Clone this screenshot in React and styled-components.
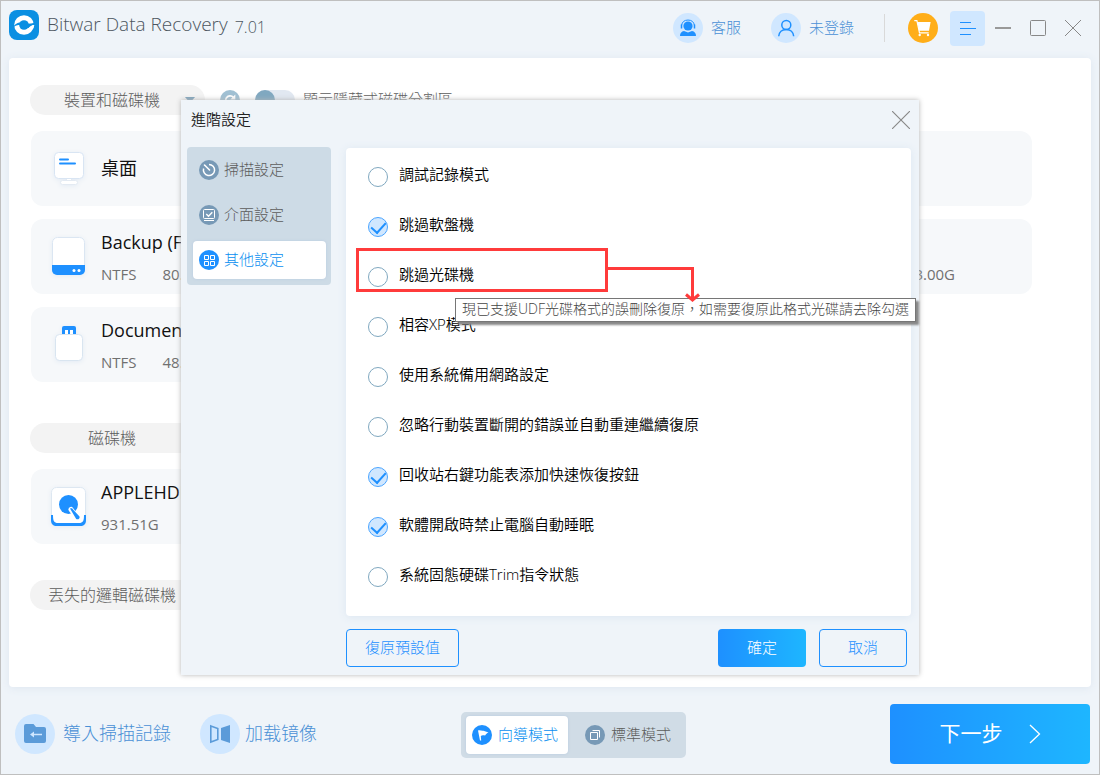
import React, { useState } from "react";
import styled, { createGlobalStyle, css } from "styled-components";

const GlobalStyle = createGlobalStyle`
  * {
    box-sizing: border-box;
  }
  body {
    margin: 0;
    font-family: "Open Sans", "Noto Sans CJK TC", sans-serif;
    font-size: 15px;
    font-weight: 300;
    color: #5c5c5c;
  }
  button,
  input {
    font: inherit;
    color: inherit;
    margin: 0;
  }
  button {
    padding: 0;
    border: 0;
    background: none;
    cursor: pointer;
  }
  svg {
    display: block;
    flex: none;
  }
`;

/* ---------- icons ---------- */

const LogoIcon = () => (
  <svg width="30" height="30" viewBox="0 0 30 30">
    <rect width="30" height="30" rx="8" fill="#0a8fe2" />
    <circle cx="15" cy="15" r="9.800" fill="#fff" />
    <path d="M17 13.800l5-.3 4-.7v2c-2.600.2-4.500 1.200-6 3.200l-3-.5z" fill="#0a8fe2" />
    <circle cx="15" cy="15" r="4.800" fill="#0a8fe2" />
    <path d="M4 17.800c1-3 3.300-5 7.300-5.600l1.500 3.300c-3.800-1-6.300-.3-8.800 2.300z" fill="#0a8fe2" />
    <path d="M19.800 17.800c1.300-1.700 3-2.600 5.500-2.900l-.8 3.300-3 1z" fill="#fff" />
  </svg>
);

const SupportIcon = () => (
  <svg width="30" height="30" viewBox="0 0 30 30">
    <circle cx="15" cy="15" r="15" fill="#d0e7ff" />
    <circle cx="15" cy="13" r="4.600" fill="#1e90ff" />
    <path d="M8.500 12.500a6.600 6.600 0 0 1 13 0" fill="none" stroke="#1e90ff" strokeWidth="1" />
    <path d="M8.500 11.500v4M21.500 11.500v4" stroke="#1e90ff" strokeWidth="1.500" />
    <path d="M7 23c0-2.800 1.400-4.500 4-5l4 1.600 4-1.600c2.600.5 4 2.200 4 5z" fill="#1e90ff" />
  </svg>
);

const UserIcon = () => (
  <svg width="30" height="30" viewBox="0 0 30 30" fill="none" stroke="#1e90ff" strokeWidth="1.500">
    <circle cx="15" cy="15" r="15" fill="#d0e7ff" stroke="none" />
    <circle cx="15.300" cy="12" r="4.500" />
    <path d="M7.700 23.300c.3-4 3.300-6.800 7.500-6.800s7.200 2.800 7.500 6.800" />
  </svg>
);

const CartIcon = () => (
  <svg width="30" height="30" viewBox="0 0 30 30">
    <circle cx="15" cy="15" r="15" fill="#ffae19" />
    <path d="M9.500 9H22.600l-1.600 8.800H11z" fill="#fff" />
    <path d="M6.300 7.600h2.600l2.600 12.200h9.200" fill="none" stroke="#fff" strokeWidth="1.200" />
    <circle cx="11.700" cy="22" r="1.200" fill="#fff" />
    <circle cx="20" cy="22" r="1.200" fill="#fff" />
  </svg>
);

const MenuIcon = () => (
  <svg width="16" height="15" viewBox="0 0 16 15" stroke="#1e90ff">
    <path d="M0 1.500h11M0 7.500h16M0 13.500h11" />
  </svg>
);

const MinimizeIcon = () => (
  <svg width="16" height="16" viewBox="0 0 16 16">
    <rect y="7" width="16" height="2" fill="#999" />
  </svg>
);

const MaximizeIcon = () => (
  <svg width="16" height="16" viewBox="0 0 16 16">
    <rect x="0.500" y="0.500" width="15" height="15" rx="1" fill="none" stroke="#888" />
  </svg>
);

const CloseIcon = ({ size = 16 }) => (
  <svg width={size} height={size} viewBox="0 0 16 16" stroke="#888">
    <path d="M0 0l16 16M16 0L0 16" />
  </svg>
);

const RefreshIcon = () => (
  <svg width="20" height="20" viewBox="0 0 20 20">
    <circle cx="10" cy="10" r="10" fill="#a0c0d3" />
    <path d="M13.500 7.500a4.500 4.500 0 1 0 1 4" fill="none" stroke="#fff" strokeWidth="1.800" />
    <path d="M15.300 4.500v5h-5z" fill="#fff" />
  </svg>
);

const ArrowDown = () => (
  <svg width="10" height="6" viewBox="0 0 10 6">
    <path d="M0 0h10L5 6z" fill="#7fa3bb" />
  </svg>
);

const DesktopIcon = () => (
  <svg width="36" height="36" viewBox="0 0 36 36">
    <path d="M15.500 27h5v4h-5z" fill="#fff" stroke="#e3eaf2" />
    <rect x="9.500" y="29.500" width="17" height="4" rx="2" fill="#fff" stroke="#e3eaf2" />
    <rect x="3.500" y="1.500" width="29" height="26" rx="4" fill="#fff" stroke="#d9e5f3" />
    <path d="M9 8.500h8M9 12.500h15" stroke="#1e90ff" strokeWidth="2" strokeLinecap="round" />
  </svg>
);

const DriveIcon = () => (
  <svg width="36" height="40" viewBox="0 0 36 40">
    <rect x="1.500" y="0.500" width="32" height="37" rx="5" fill="#fff" stroke="#dbe6f2" />
    <path d="M1 28h33v5a5 5 0 0 1-5 5H6a5 5 0 0 1-5-5z" fill="#1e90ff" />
    <circle cx="23" cy="33.500" r="1.500" fill="#fff" />
    <circle cx="28" cy="33.500" r="1.500" fill="#fff" />
  </svg>
);

const UsbIcon = () => (
  <svg width="36" height="38" viewBox="0 0 36 38">
    <rect x="11" y="0" width="14" height="12" rx="2" fill="#1e90ff" />
    <path d="M14 4h3v4h-3zM19 4h3v4h-3z" fill="#fff" />
    <rect x="4.500" y="8.500" width="27" height="26" rx="4" fill="#fff" stroke="#d9e5f0" />
  </svg>
);

const DiskIcon = () => (
  <svg width="36" height="40" viewBox="0 0 36 40">
    <rect x="0.500" y="0.500" width="34" height="37" rx="5" fill="#fff" stroke="#dde7f1" />
    <path d="M0 28v5c0 4 2 6 6 6h23c4 0 6-2 6-6v-5h-2c0 6-1 8-5 8H7c-4 0-5-2-5-8z" fill="#1e90ff" />
    <circle cx="17.500" cy="17.500" r="9.500" fill="#1e90ff" />
    <path d="M20 22.500l6 8" stroke="#fff" strokeWidth="5" strokeLinecap="round" />
    <path d="M19 21.500c1.500-.8 2.600-.2 3 1l6.500 7c.8 2-1.600 3.600-3.300 2.500z" fill="#1e90ff" />
  </svg>
);

const Disc = ({ active, children }) => (
  <svg width="20" height="20" viewBox="0 0 20 20" fill="none" stroke="#fff">
    <circle cx="10" cy="10" r="10" fill={active ? "#1e90ff" : "#7799b6"} stroke="none" />
    {children}
  </svg>
);

const ScanIcon = ({ active }) => (
  <Disc active={active}>
    <path d="M10 4.400A5.600 5.600 0 1 1 4.600 8.500" strokeWidth="1.500" />
    <path d="M5.500 5l5 5" strokeWidth="1.600" strokeLinecap="round" />
  </Disc>
);

const InterfaceIcon = ({ active }) => (
  <Disc active={active}>
    <rect x="4.500" y="4.500" width="11" height="9" rx="1" />
    <path d="M5 15.500h10" />
    <path d="M7.300 9l2.200 2.200 3.800-4" strokeWidth="1.400" />
  </Disc>
);

const OtherIcon = ({ active }) => (
  <Disc active={active}>
    <path d="M5.500 5.500h4v4h-4zM11.500 5.500h4v4h-4zM5.500 11.500h4v4h-4zM11.500 11.500h4v4h-4z" />
  </Disc>
);

const FlagIcon = ({ active }) => (
  <Disc active={active}>
    <path d="M6 5.500c2-1 3.500.8 5.500.2l5 1.800c-1.800.8-2.400 1.500-3.400 3-1.600-.3-2.800-.8-4.300.5L9.200 15.500H8z" fill="#fff" stroke="none" />
  </Disc>
);

const WindowsIcon = ({ active }) => (
  <Disc active={active}>
    <path d="M5.500 7.500h7v7h-7z" />
    <path d="M7.500 5.500h7v7" />
  </Disc>
);

const FolderIcon = () => (
  <svg width="40" height="40" viewBox="0 0 40 40">
    <circle cx="20" cy="20" r="20" fill="#d0e7ff" />
    <path d="M9 12a2 2 0 0 1 2-2h7.500l2.500 3h8a2 2 0 0 1 2 2v12a2 2 0 0 1-2 2H11a2 2 0 0 1-2-2z" fill="#5b9bd9" />
    <path d="M17 20.500h10" stroke="#d0e7ff" strokeWidth="1.500" />
    <path d="M15 20.500l4-3v6z" fill="#d0e7ff" />
  </svg>
);

const MirrorIcon = () => (
  <svg width="40" height="40" viewBox="0 0 40 40">
    <circle cx="20" cy="20" r="20" fill="#d0e7ff" />
    <path d="M10.800 12l7 2.500v11l-7 2.500z" fill="none" stroke="#5b9bd9" strokeWidth="1.600" />
    <path d="M30 11l-9 3v12l9 3z" fill="#5b9bd9" />
  </svg>
);

const NextIcon = () => (
  <svg width="12" height="20" viewBox="0 0 12 20" fill="none" stroke="#fff" strokeWidth="1.300">
    <path d="M1 1l9.500 9L1 19" />
  </svg>
);

/* ---------- data ---------- */

const tabs = [
  { label: "掃描設定", Icon: ScanIcon },
  { label: "介面設定", Icon: InterfaceIcon },
  { label: "其他設定", Icon: OtherIcon },
];

const modes = [
  { label: "向導模式", Icon: FlagIcon },
  { label: "標準模式", Icon: WindowsIcon },
];

const options = [
  { id: "debug", label: "調試記錄模式" },
  { id: "floppy", label: "跳過軟盤機", checked: true },
  {
    id: "cdrom",
    label: "跳過光碟機",
    tip: "現已支援UDF光碟格式的誤刪除復原，如需要復原此格式光碟請去除勾選",
  },
  { id: "xp", label: "相容XP模式" },
  { id: "network", label: "使用系統備用網路設定" },
  { id: "mobile", label: "忽略行動裝置斷開的錯誤並自動重連繼續復原" },
  { id: "recycle", label: "回收站右鍵功能表添加快速恢復按鈕", checked: true },
  { id: "sleep", label: "軟體開啟時禁止電腦自動睡眠", checked: true },
  { id: "trim", label: "系統固態硬碟Trim指令狀態" },
];

/* ---------- parts ---------- */

const TopBar = () => (
  <Header>
    <Brand>
      <LogoIcon />
      <AppName>Bitwar Data Recovery</AppName>
      <Version>7.01</Version>
    </Brand>
    <HeaderLink>
      <SupportIcon />
      <Caption>客服</Caption>
    </HeaderLink>
    <HeaderLink>
      <UserIcon />
      <Caption>未登錄</Caption>
    </HeaderLink>
    <Divider />
    <CartButton aria-label="cart">
      <CartIcon />
    </CartButton>
    <MenuButton aria-label="menu">
      <MenuIcon />
    </MenuButton>
    <WindowButtons>
      <button aria-label="minimize">
        <MinimizeIcon />
      </button>
      <button aria-label="maximize">
        <MaximizeIcon />
      </button>
      <button aria-label="close">
        <CloseIcon />
      </button>
    </WindowButtons>
  </Header>
);

const GroupPill = ({ children }) => (
  <Pill>
    <span>{children}</span>
    <ArrowDown />
  </Pill>
);

const DriveCard = ({ icon, name, fs, size }) => (
  <Card>
    <CardIcon>{icon}</CardIcon>
    <div>
      <CardName>{name}</CardName>
      {size && (
        <CardInfo>
          {fs && <span>{fs}</span>}
          <span>{size}</span>
        </CardInfo>
      )}
    </div>
  </Card>
);

const DrivePanel = () => (
  <Panel>
    <Section $space={41}>
      <PanelTools>
        <GroupPill>裝置和磁碟機</GroupPill>
        <button aria-label="refresh">
          <RefreshIcon />
        </button>
        <ToggleLabel>
          <Toggle type="checkbox" />
          <Caption>顯示隱藏式磁碟分割區</Caption>
        </ToggleLabel>
      </PanelTools>
      <Cards>
        <DriveCard icon={<DesktopIcon />} name="桌面" />
        <Card />
        <Card />
        <DriveCard icon={<DriveIcon />} name="Backup (F:)" fs="NTFS" size="80.00G" />
        <Card />
        <Card $end>
          <CardInfo>3.00G</CardInfo>
        </Card>
        <DriveCard icon={<UsbIcon />} name="Documents" fs="NTFS" size="48.00G" />
      </Cards>
    </Section>
    <Section $space={36}>
      <GroupPill>磁碟機</GroupPill>
      <Cards>
        <DriveCard icon={<DiskIcon />} name="APPLEHDD" size="931.51G" />
      </Cards>
    </Section>
    <Section $space={0}>
      <GroupPill>丟失的邏輯磁碟機</GroupPill>
    </Section>
  </Panel>
);

const Callout = ({ text }) => (
  <>
    <CalloutBox />
    <Tooltip role="tooltip">{text}</Tooltip>
    <CalloutArrow width="94" height="40" viewBox="0 0 94 40" fill="none" stroke="#ff3b3b" strokeWidth="3">
      <path d="M0 4.500h84.500v30" />
      <path d="M78 30.500l6.500 5.500 6.500-5.500" />
    </CalloutArrow>
  </>
);

const SettingsDialog = ({ onClose }) => {
  const [tab, setTab] = useState(2);

  return (
    <Overlay>
      <Dialog role="dialog" aria-labelledby="dialog-title">
        <DialogHead>
          <DialogTitle id="dialog-title">進階設定</DialogTitle>
          <button aria-label="close" onClick={onClose}>
            <CloseIcon size={18} />
          </button>
        </DialogHead>
        <DialogBody>
          <SideNav>
            {tabs.map(({ label, Icon }, i) => (
              <SideItem key={label} $active={i === tab} onClick={() => setTab(i)}>
                <Icon active={i === tab} />
                <Caption>{label}</Caption>
              </SideItem>
            ))}
          </SideNav>
          <OptionList>
            {options.map((option) => (
              <OptionRow key={option.id}>
                <RoundCheck type="checkbox" id={option.id} defaultChecked={option.checked} />
                <OptionLabel htmlFor={option.id}>{option.label}</OptionLabel>
                {option.tip && <Callout text={option.tip} />}
              </OptionRow>
            ))}
          </OptionList>
        </DialogBody>
        <DialogFoot>
          <DialogButton $wide>復原預設值</DialogButton>
          <DialogActions>
            <DialogButton $primary onClick={onClose}>
              確定
            </DialogButton>
            <DialogButton onClick={onClose}>取消</DialogButton>
          </DialogActions>
        </DialogFoot>
      </Dialog>
    </Overlay>
  );
};

const BottomBar = () => {
  const [mode, setMode] = useState(0);

  return (
    <Footer>
      <FooterLinks>
        <FooterLink $gap={8}>
          <FolderIcon />
          <Caption>導入掃描記錄</Caption>
        </FooterLink>
        <FooterLink $gap={5}>
          <MirrorIcon />
          <Caption>加载镜像</Caption>
        </FooterLink>
      </FooterLinks>
      <Segment>
        {modes.map(({ label, Icon }, i) => (
          <SegmentItem key={label} $active={i === mode} onClick={() => setMode(i)}>
            <Icon active={i === mode} />
            <Caption>{label}</Caption>
          </SegmentItem>
        ))}
      </Segment>
      <NextButton>
        <Caption>下一步</Caption>
        <NextIcon />
      </NextButton>
    </Footer>
  );
};

const App = () => {
  const [open, setOpen] = useState(true);

  return (
    <>
      <GlobalStyle />
      <Window>
        <TopBar />
        <DrivePanel />
        <BottomBar />
        {open && <SettingsDialog onClose={() => setOpen(false)} />}
      </Window>
    </>
  );
};

/* ---------- styles ---------- */

const Window = styled.div`
  position: relative;
  display: flex;
  flex-direction: column;
  min-height: 100vh;
  border: 1px solid #bfbfbf;
  background: #eff4f9;
`;

const Caption = styled.span`
  padding-bottom: 4px;
`;

const Header = styled.header`
  display: flex;
  align-items: center;
  height: 57px;
  padding: 0 18px 3px 8px;
`;

const Brand = styled.div`
  display: flex;
  align-items: center;
  height: 30px;
  margin-right: auto;
  margin-bottom: 6px;
`;

const AppName = styled.h1`
  margin: 0 7px 0 8px;
  padding-bottom: 2px;
  font-size: 19px;
  line-height: 26px;
  font-weight: 300;
  color: #4c5660;
`;

const Version = styled.span`
  padding-top: 3px;
  font-size: 16px;
  color: #4c5660;
`;

const HeaderLink = styled.button`
  display: flex;
  align-items: center;
  gap: 8px;
  margin-right: 30px;
  color: #4a90d6;
`;

const Divider = styled.span`
  width: 1px;
  height: 28px;
  background: #d9d9d9;
`;

const CartButton = styled.button`
  margin: 0 12px 0 23px;
`;

const MenuButton = styled.button`
  display: grid;
  place-items: center;
  width: 35px;
  height: 35px;
  border-radius: 4px;
  background: #d0e7ff;
`;

const WindowButtons = styled.div`
  display: flex;
  gap: 19px;
  margin-left: 10px;
`;

const Panel = styled.main`
  flex: 1;
  margin: 0 8px;
  padding: 27px 59px 27px 21px;
  border-radius: 4px;
  background: #fff;
  box-shadow: 0 1px 8px #dde6f0;
`;

const Section = styled.section`
  margin-bottom: ${({ $space }) => $space}px;
`;

const PanelTools = styled.div`
  display: flex;
  align-items: center;
  gap: 15px;
`;

const Pill = styled.div`
  display: flex;
  align-items: center;
  width: 175px;
  height: 30px;
  padding: 0 10px 0 9px;
  border-radius: 15px;
  background: #f3f3f3;
  font-size: 16px;
  white-space: nowrap;

  span {
    flex: 1;
    padding-bottom: 2px;
    text-align: center;
  }
`;

const ToggleLabel = styled.label`
  display: flex;
  align-items: center;
  gap: 8px;
`;

const Toggle = styled.input`
  appearance: none;
  width: 40px;
  height: 20px;
  border-radius: 10px;
  background: #e1e8f1;

  &::before {
    content: "";
    display: block;
    width: 20px;
    height: 20px;
    border-radius: 50%;
    background: #80a8c0;
  }
  &:checked::before {
    margin-left: 20px;
  }
`;

const Cards = styled.div`
  display: grid;
  grid-template-columns: repeat(3, 1fr);
  gap: 13px 20px;
  margin: 16px 0 0 1px;
`;

const Card = styled.article`
  display: flex;
  align-items: center;
  gap: 14px;
  height: 75px;
  padding: 0 20px;
  border-radius: 12px;
  background: #f6f8fa;

  ${({ $end }) =>
    $end &&
    css`
      justify-content: flex-end;
      align-items: flex-end;
      padding: 0 77px 10px 20px;
    `}
`;

const CardIcon = styled.div`
  display: grid;
  place-items: center;
  width: 36px;
  filter: drop-shadow(0 1px 2px #e3ebf4);
`;

const CardName = styled.h2`
  margin: 0;
  padding-bottom: 1px;
  font-size: 18px;
  line-height: 24px;
  font-weight: 400;
  color: #111;
`;

const CardInfo = styled.p`
  display: flex;
  gap: 26px;
  margin: 9px 0 0;
  font-size: 15px;
  line-height: 20px;
  font-weight: 400;
  color: #707070;
`;

const Footer = styled.footer`
  display: flex;
  align-items: center;
  height: 87px;
  padding: 6px 9px 0 14px;
`;

const FooterLinks = styled.div`
  display: flex;
  gap: 29px;
`;

const FooterLink = styled.button`
  display: flex;
  align-items: center;
  gap: ${({ $gap }) => $gap}px;
  font-size: 18px;
  color: #4a90d6;
`;

const Segment = styled.div`
  display: flex;
  gap: 11px;
  margin: 3px 0 0 144px;
  padding: 4px 5px;
  border-radius: 5px;
  background: #d0dce6;
`;

const itemStyle = css`
  display: flex;
  align-items: center;
  height: 38px;
  padding: 0 6px;
  border-radius: 4px;
  color: ${({ $active }) => ($active ? "#0a8ff0" : "#5c5c5c")};
  background: ${({ $active }) => ($active ? "#fff" : "none")};
  box-shadow: ${({ $active }) => ($active ? "0 0 3px #b9cbe0" : "none")};
`;

const SegmentItem = styled.button`
  ${itemStyle}
  gap: 6px;
  padding-right: 10px;
`;

const NextButton = styled.button`
  display: flex;
  align-items: center;
  justify-content: center;
  gap: 26px;
  width: 200px;
  height: 60px;
  margin-left: auto;
  border-radius: 4px;
  background: linear-gradient(90deg, #1e90ff, #1eb6ff);
  font-size: 21px;
  font-weight: 400;
  color: #fff;
`;

const Overlay = styled.div`
  position: absolute;
  inset: 0;
  display: grid;
  place-items: center;
`;

const Dialog = styled.div`
  width: 100%;
  max-width: 738px;
  background: #eff4f9;
  box-shadow: 0 0 5px #b5b5b5;
`;

const DialogHead = styled.div`
  display: flex;
  align-items: center;
  justify-content: space-between;
  height: 47px;
  padding: 0 9px 8px 10px;
`;

const DialogTitle = styled.h2`
  margin: 0;
  padding-bottom: 3px;
  font-size: 15px;
  font-weight: 350;
  color: #222;
`;

const DialogBody = styled.div`
  display: flex;
  align-items: flex-start;
  gap: 15px;
  padding: 0 8px 0 6px;
`;

const SideNav = styled.nav`
  display: flex;
  flex-direction: column;
  gap: 7px;
  width: 144px;
  padding: 4px 5px 6px 6px;
  border-radius: 4px;
  background: #cddbe6;
`;

const SideItem = styled.button`
  ${itemStyle}
  gap: 5px;
`;

const OptionList = styled.div`
  flex: 1;
  margin-top: 1px;
  padding: 2px 22px 16px;
  border-radius: 4px;
  background: #fff;
  box-shadow: 0 1px 8px #dbe6f1;
`;

const OptionRow = styled.div`
  position: relative;
  display: flex;
  align-items: center;
  gap: 11px;
  height: 50px;
`;

const RoundCheck = styled.input`
  appearance: none;
  display: grid;
  justify-items: center;
  width: 20px;
  height: 20px;
  margin-top: 4px;
  border: 1px solid #80a8c0;
  border-radius: 50%;
  background: #fff;

  &:checked {
    border-color: #4aa5ff;
    background: #d0e7ff;
  }
  &:checked::after {
    content: "";
    width: 7px;
    height: 12px;
    margin-top: 1px;
    border: solid #1e90ff;
    border-width: 0 2px 2px 0;
    transform: rotate(42deg);
  }
`;

const OptionLabel = styled.label`
  padding-bottom: 4px;
  font-weight: 350;
  color: #000;
`;

const CalloutBox = styled.div`
  position: absolute;
  top: -2px;
  left: -12px;
  width: 252px;
  height: 44px;
  border: 3px solid #ff3b3b;
  pointer-events: none;
`;

const CalloutArrow = styled.svg`
  position: absolute;
  top: 14px;
  left: 240px;
  z-index: 2;
`;

const Tooltip = styled.div`
  position: absolute;
  top: 48px;
  left: 87px;
  z-index: 1;
  padding: 0 6px 2px;
  border: 1px solid #767676;
  background: #fff;
  box-shadow: 3px 3px 2px #888;
  font-size: 14px;
  line-height: 20px;
  white-space: nowrap;
  color: #444;
`;

const DialogFoot = styled.div`
  display: flex;
  justify-content: space-between;
  padding: 13px 12px 8px 165px;
`;

const DialogActions = styled.div`
  display: flex;
  gap: 13px;
`;

const DialogButton = styled.button`
  width: ${({ $wide }) => ($wide ? 113 : 88)}px;
  height: 38px;
  padding-bottom: 3px;
  border: ${({ $primary }) => ($primary ? "0" : "1px solid #1e90ff")};
  border-radius: 4px;
  background: ${({ $primary }) => ($primary ? "linear-gradient(90deg, #1e90ff, #1eb6ff)" : "none")};
  color: ${({ $primary }) => ($primary ? "#fff" : "#1e90ff")};
`;

export default App;
